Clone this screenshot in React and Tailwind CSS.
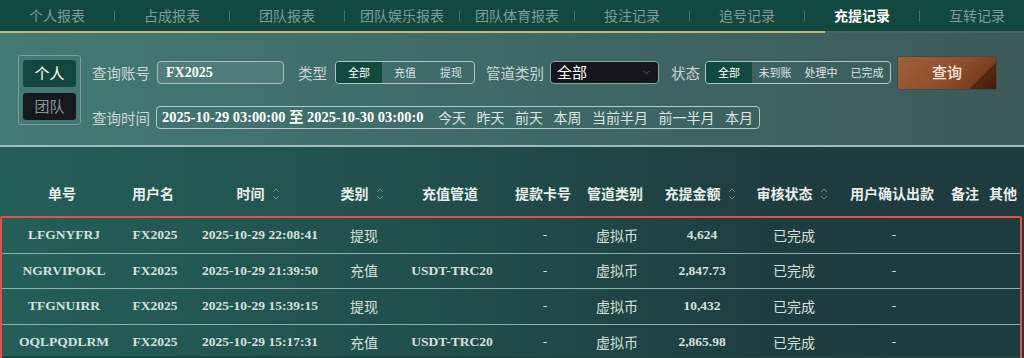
import React from "react";
import { ChevronDown } from "lucide-react";

const tabs = ["个人报表", "占成报表", "团队报表", "团队娱乐报表", "团队体育报表", "投注记录", "追号记录", "充提记录", "互转记录"];

const quick = ["今天", "昨天", "前天", "本周", "当前半月", "前一半月", "本月"];

const rows = [
  { id: "LFGNYFRJ", user: "FX2025", time: "2025-10-29 22:08:41", type: "提现", channel: "", amount: "4,624" },
  { id: "NGRVIPOKL", user: "FX2025", time: "2025-10-29 21:39:50", type: "充值", channel: "USDT-TRC20", amount: "2,847.73" },
  { id: "TFGNUIRR", user: "FX2025", time: "2025-10-29 15:39:15", type: "提现", channel: "", amount: "10,432" },
  { id: "OQLPQDLRM", user: "FX2025", time: "2025-10-29 15:17:31", type: "充值", channel: "USDT-TRC20", amount: "2,865.98" },
];

const cols = "grid grid-cols-[124px_58px_152px_56px_120px_66px_78px_92px_92px_108px_38px_38px]";

const SortIcon = () => (
  <svg width="8" height="14" viewBox="0 0 8 14" fill="none" stroke="#6b8a85" strokeWidth="1">
    <path d="M1 5 L4 2 L7 5" />
    <path d="M1 9 L4 12 L7 9" />
  </svg>
);

const Segmented = ({ items, w }) => (
  <div className="flex h-[23px] rounded-[4px] border border-[#b3c7c3] overflow-hidden">
    {items.map((it, i) => (
      <div
        key={it}
        className={`${w} flex items-center justify-center text-[11px] ${i === 0 ? "bg-[#0f4a3f] text-white" : "text-[#dbe5e3]"}`}
      >
        {it}
      </div>
    ))}
  </div>
);

const Head = ({ label, sort }) => (
  <div className="flex items-center justify-center gap-[7px]">
    <span>{label}</span>
    {sort && <SortIcon />}
  </div>
);

export default function App() {
  return (
    <div className="w-[1024px] h-[358px] overflow-hidden font-['Noto_Sans_CJK_SC',sans-serif] bg-[#1f4442]">
      {/* tabs */}
      <div className="h-[31px] bg-[#114840] flex items-center overflow-hidden whitespace-nowrap">
        {tabs.map((t, i) => (
          <React.Fragment key={t}>
            <div
              className={`w-[114px] shrink-0 text-center text-[14px] ${t === "充提记录" ? "text-white font-bold" : "text-[#7f9d97]"}`}
            >
              {t}
            </div>
            {i < tabs.length - 1 && <span className="w-px h-[10px] shrink-0 bg-[#4f7069]" />}
          </React.Fragment>
        ))}
      </div>
      <div className="flex h-[2px]">
        <div className="w-[825px] bg-[#c8b57f]" />
        <div className="flex-1 bg-[#4c6561]" />
      </div>

      {/* filters */}
      <div className="h-[114px] bg-[linear-gradient(90deg,#437a74,#3e6966_50%,#3b5a59)] border-b-2 border-[#9fbdb8] flex pl-[18px] pt-[22px]">
        <div className="w-[63px] h-[70px] border border-[#7f9e99] rounded-[3px] p-[4px] flex flex-col gap-[6px]">
          <div className="h-[27px] rounded-[3px] bg-[#12473e] text-white text-[15px] flex items-center justify-center">个人</div>
          <div className="h-[27px] rounded-[3px] bg-[#15191c] text-[#8a9694] text-[15px] flex items-center justify-center">团队</div>
        </div>
        <div className="ml-[11px] mt-[6px] flex flex-col gap-[22px] whitespace-nowrap">
          <div className="h-[23px] flex items-center text-[#c9d8d5] text-[14.5px]">
            <span>查询账号</span>
            <div className="ml-[7px] w-[127px] h-[23px] shrink-0 rounded-[4px] border border-[#a9c0bc] bg-[#ffffff14] flex items-center pl-[8px] font-['Liberation_Serif',serif] font-bold text-[14px] text-white">
              FX2025
            </div>
            <span className="ml-[14px]">类型</span>
            <div className="ml-[8px] shrink-0">
              <Segmented items={["全部", "充值", "提现"]} w="w-[46px]" />
            </div>
            <span className="ml-[11px]">管道类别</span>
            <div className="ml-[6px] w-[109px] h-[23px] shrink-0 rounded-[4px] border border-[#8ea5a1] bg-[#16161c] flex items-center justify-between pl-[6px] pr-[6px] text-white text-[15px]">
              <span>全部</span>
              <ChevronDown size={11} color="#6d7474" strokeWidth={1.5} />
            </div>
            <span className="ml-[12px]">状态</span>
            <div className="ml-[5px] shrink-0">
              <Segmented items={["全部", "未到账", "处理中", "已完成"]} w="w-[46px]" />
            </div>
            <div className="ml-[6px] w-[100px] h-[34px] shrink-0 rounded-[2px] border border-[#3a4f4c] bg-[linear-gradient(135deg,#a0603a_0%,#8c4c2a_60%,#7a3d1f_79%,#582913_80%,#3e1c0b_100%)] flex items-center justify-center text-[#f4e7dc] text-[15px] font-medium">
              查询
            </div>
          </div>
          <div className="h-[23px] flex items-center text-[#c9d8d5] text-[14.5px]">
            <span>查询时间</span>
            <div className="ml-[6px] w-[604px] h-[23px] shrink-0 rounded-[4px] border border-[#b5cbc7] flex items-center">
              <div className="w-[262px] shrink-0 ml-[5px] overflow-hidden whitespace-nowrap font-['Liberation_Serif','Noto_Sans_CJK_SC',serif] font-bold text-[14.4px] text-white">
                2025-10-29 03:00:00 至 2025-10-30 03:00:00
              </div>
              <div className="ml-[14px] flex shrink-0 gap-[10.5px] whitespace-nowrap text-[#dbe5e3] text-[14px]">
                {quick.map((q) => (
                  <span key={q}>{q}</span>
                ))}
              </div>
            </div>
          </div>
        </div>
      </div>

      {/* table */}
      <div className="h-[209px] bg-[linear-gradient(90deg,#245f57,#21504b_40%,#1e3d3f_75%,#1e3b3d)] pt-[29px]">
        <div className={`${cols} h-[35px] items-center text-[14px] font-semibold text-[#e7eeec]`}>
          <Head label="单号" />
          <Head label="用户名" />
          <Head label="时间" sort />
          <Head label="类别" sort />
          <Head label="充值管道" />
          <Head label="提款卡号" />
          <Head label="管道类别" />
          <Head label="充提金额" sort />
          <Head label="审核状态" sort />
          <Head label="用户确认出款" />
          <Head label="备注" />
          <Head label="其他" />
        </div>
        <div className="mt-[5px] w-[1022px] border-2 border-[#e2504c] rounded-[2px]">
          {rows.map((r, i) => (
            <div
              key={r.id}
              className={`${cols} h-[35.5px] items-center text-center text-[13.5px] text-[#d5e0dd] font-['Liberation_Serif','Noto_Sans_CJK_SC',serif] ${i < rows.length - 1 ? "border-b border-[#8db2ac]" : ""}`}
            >
              <div className="font-bold">{r.id}</div>
              <div className="font-bold">{r.user}</div>
              <div className="font-bold">{r.time}</div>
              <div className="font-['Noto_Sans_CJK_SC',sans-serif] text-[14px]">{r.type}</div>
              <div className="font-bold">{r.channel}</div>
              <div>-</div>
              <div className="font-['Noto_Sans_CJK_SC',sans-serif] text-[14px]">虚拟币</div>
              <div className="font-bold">{r.amount}</div>
              <div className="font-['Noto_Sans_CJK_SC',sans-serif] text-[14px]">已完成</div>
              <div>-</div>
              <div></div>
              <div></div>
            </div>
          ))}
        </div>
      </div>
    </div>
  );
}
